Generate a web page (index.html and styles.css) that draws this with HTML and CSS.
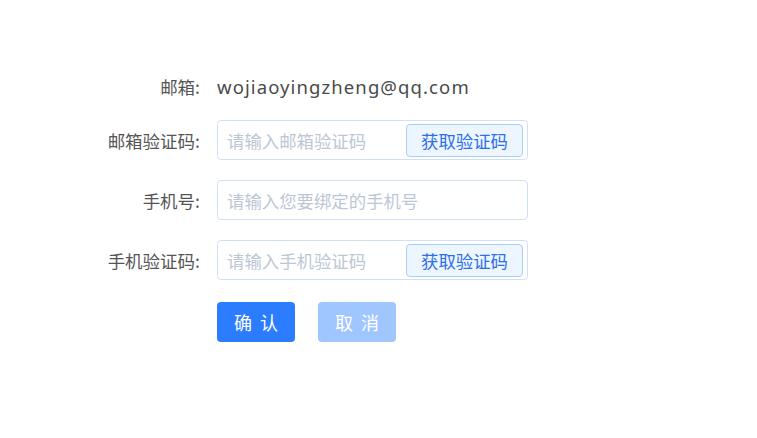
FILE: index.html
```html
<!DOCTYPE html>
<html lang="zh-CN">
<head>
<meta charset="utf-8">
<title>绑定手机号</title>
<link rel="stylesheet" href="styles.css">
</head>
<body>
<form class="form">
  <div class="item item-text">
    <label class="label">邮箱:</label>
    <div class="content"><span class="email">wojiaoyingzheng@qq.com</span></div>
  </div>
  <div class="item">
    <label class="label">邮箱验证码:</label>
    <div class="content">
      <div class="input">
        <input type="text" placeholder="请输入邮箱验证码">
        <button type="button" class="code-btn">获取验证码</button>
      </div>
    </div>
  </div>
  <div class="item">
    <label class="label">手机号:</label>
    <div class="content">
      <div class="input">
        <input type="text" placeholder="请输入您要绑定的手机号">
      </div>
    </div>
  </div>
  <div class="item">
    <label class="label">手机验证码:</label>
    <div class="content">
      <div class="input">
        <input type="text" placeholder="请输入手机验证码">
        <button type="button" class="code-btn">获取验证码</button>
      </div>
    </div>
  </div>
  <div class="item item-actions">
    <div class="label"></div>
    <div class="content actions">
      <button type="button" class="btn btn-primary">确认</button>
      <button type="button" class="btn btn-disabled">取消</button>
    </div>
  </div>
</form>
</body>
</html>
```
FILE: styles.css
```css
html, body {
  margin: 0;
  padding: 0;
  background: #fff;
}
body {
  font-family: "Noto Sans", "Noto Sans CJK SC", sans-serif;
  font-size: 17.5px;
  color: #606266;
}
.form {
  padding-top: 72px;
  display: flex;
  flex-direction: column;
  gap: 20px;
}
.item {
  display: flex;
  align-items: center;
  height: 40px;
}
.item-text {
  height: 32px;
  margin-top: -2px;
  margin-bottom: -2px;
}
.item-actions {
  margin-top: 2px;
}
.label {
  width: 200px;
  padding-right: 17px;
  text-align: right;
  color: #555;
  font-family: "Noto Sans CJK SC", sans-serif;
  font-size: 17.5px;
  flex-shrink: 0;
}
.content {
  display: flex;
  align-items: center;
}
.email {
  font-family: "Noto Sans", "Noto Sans CJK SC", sans-serif;
  font-size: 18.5px;
  letter-spacing: 1.1px;
  color: #4a4a4a;
}
.input {
  box-sizing: border-box;
  width: 311px;
  height: 40px;
  border: 1px solid #cfe1f9;
  border-radius: 4px;
  display: flex;
  align-items: center;
  padding: 0 4px 0 9px;
}
.input input {
  flex: 1;
  min-width: 0;
  border: none;
  outline: none;
  background: transparent;
  font-family: "Noto Sans CJK SC", sans-serif;
  font-size: 17.4px;
  color: #606266;
  padding: 0;
}
.input input::placeholder {
  color: #bcc7d6;
}
.code-btn {
  box-sizing: border-box;
  width: 117px;
  height: 33px;
  border: 1px solid #a9cdfd;
  border-radius: 4px;
  background: #edf5ff;
  color: #2c6fe8;
  font-family: "Noto Sans CJK SC", sans-serif;
  font-size: 17.4px;
  padding: 0;
  flex-shrink: 0;
}
.actions {
  gap: 23px;
}
.btn {
  box-sizing: border-box;
  width: 78px;
  height: 40px;
  border: none;
  border-radius: 4px;
  color: #fff;
  font-family: "Noto Sans CJK SC", sans-serif;
  font-size: 18px;
  letter-spacing: 8px;
  text-indent: 8px;
  padding: 0;
}
.btn-primary {
  background: #2b7cff;
}
.btn-disabled {
  background: #a0c6ff;
}
```
